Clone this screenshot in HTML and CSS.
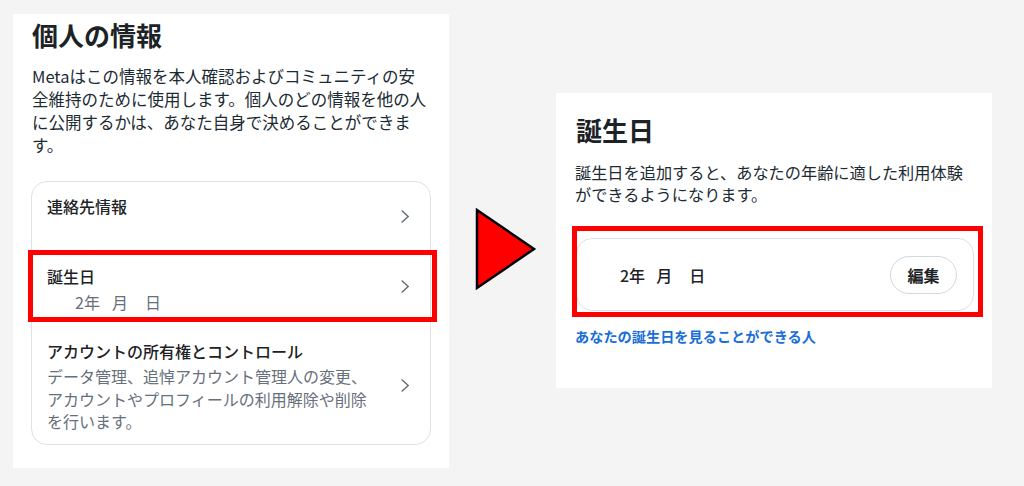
FILE: index.html
```html
<!DOCTYPE html>
<html lang="ja">
<head>
<meta charset="utf-8">
<link rel="stylesheet" href="styles.css">
</head>
<body>
<div class="stage">
  <section class="panel left">
    <h1 class="title">個人の情報</h1>
    <p class="lead">Metaはこの情報を本人確認およびコミュニティの安<br>全維持のために使用します。個人のどの情報を他の人<br>に公開するかは、あなた自身で決めることができま<br>す。</p>
    <div class="card">
      <div class="row row-contact">
        <div class="row-text">
          <div class="row-title">連絡先情報</div>
        </div>
        <svg class="chev" width="9" height="13" viewBox="0 0 9 13"><path d="M1.2 1 L7.2 6.5 L1.2 12" fill="none" stroke="#65707c" stroke-width="1.6" stroke-linecap="round" stroke-linejoin="round"/></svg>
      </div>
      <div class="row row-birth mark-left">
        <div class="row-text">
          <div class="row-title">誕生日</div>
          <div class="row-date"><span>2年</span><span class="d-m">月</span><span class="d-d">日</span></div>
        </div>
        <svg class="chev" width="9" height="13" viewBox="0 0 9 13"><path d="M1.2 1 L7.2 6.5 L1.2 12" fill="none" stroke="#65707c" stroke-width="1.6" stroke-linecap="round" stroke-linejoin="round"/></svg>
      </div>
      <div class="row row-account">
        <div class="row-text">
          <div class="row-title">アカウントの所有権とコントロール</div>
          <div class="row-sub">データ管理、追悼アカウント管理人の変更、<br>アカウントやプロフィールの利用解除や削除<br>を行います。</div>
        </div>
        <svg class="chev" width="9" height="13" viewBox="0 0 9 13"><path d="M1.2 1 L7.2 6.5 L1.2 12" fill="none" stroke="#65707c" stroke-width="1.6" stroke-linecap="round" stroke-linejoin="round"/></svg>
      </div>
    </div>
  </section>

  <div class="arrow">
    <svg width="62" height="84" viewBox="0 0 62 84"><polygon points="2,2 59,41 2,80" fill="#ff0000" stroke="#000" stroke-width="2.5" stroke-linejoin="miter"/></svg>
  </div>

  <section class="panel right">
    <h1 class="title">誕生日</h1>
    <p class="lead2">誕生日を追加すると、あなたの年齢に適した利用体験<br>ができるようになります。</p>
    <div class="bcard mark-right">
      <div class="bdate"><span>2年</span><span class="d-m2">月</span><span class="d-d2">日</span></div>
      <button class="edit">編集</button>
    </div>
    <a class="link" href="#">あなたの誕生日を見ることができる人</a>
  </section>
</div>
</body>
</html>
```

FILE: styles.css
```css
* { box-sizing: border-box; }
html, body { margin: 0; padding: 0; }
body {
  background: #f4f4f4;
  font-family: "Noto Sans CJK JP", "Noto Sans", sans-serif;
  color: #1c2b33;
  width: 1024px;
  height: 486px;
  overflow: hidden;
}
.stage {
  display: flex;
  align-items: flex-start;
  padding-left: 13px;
}
.panel {
  background: #fff;
  width: 436px;
}
.left {
  margin-top: 14px;
  height: 454px;
  padding: 4px 18px 0 18px;
}
.title {
  margin: 0;
  font-size: 26px;
  line-height: 34px;
  font-weight: 700;
  color: #1c2226;
  padding-left: 1px;
}
.lead {
  margin: 13px 0 0 1px;
  font-size: 16.5px;
  line-height: 23px;
  color: #1c2b33;
  width: 410px;
  white-space: nowrap;
}
.card {
  margin-top: 24px;
  border: 1px solid #dde2e7;
  border-radius: 16px;
  width: 400px;
}
.row {
  display: flex;
  align-items: center;
  padding: 0 20px 0 15px;
  position: relative;
}
.row-text { flex: 1; }
.row-title {
  font-size: 16px;
  line-height: 22px;
  font-weight: 500;
  color: #1c2226;
}
.row-contact { height: 68px; }
.row-contact .row-text { align-self: flex-start; padding-top: 13px; }
.row-birth { height: 72px; }
.row-birth .row-text { align-self: flex-start; padding-top: 15px; }
.row-date {
  margin-top: 4px;
  padding-left: 28px;
  font-size: 16px;
  line-height: 22px;
  color: #65707c;
}
.d-m { margin-left: 12px; }
.d-d { margin-left: 17px; }
.row-account { height: 122px; }
.row-account .row-text { align-self: flex-start; padding-top: 18px; }
.row-sub {
  margin-top: 3px;
  font-size: 16px;
  line-height: 22.5px;
  color: #65707c;
  white-space: nowrap;
}
.chev { flex: none; }
.row-account .chev { margin-top: 4px; }

.mark-left::after {
  content: "";
  position: absolute;
  top: 0;
  bottom: 0;
  left: -4px;
  right: -7px;
  border: 5px solid #ff0000;
  pointer-events: none;
}

.arrow {
  width: 107px;
  padding: 208px 0 0 26px;
}
.arrow svg { display: block; }

.right {
  margin-top: 93px;
  height: 295px;
  padding: 20px 18px 0 19px;
}
.lead2 {
  margin: 14px 0 0 0;
  font-size: 16.2px;
  line-height: 22px;
  color: #1c2b33;
  white-space: nowrap;
}
.bcard {
  position: relative;
  margin-top: 33px;
  margin-left: 1px;
  height: 73px;
  width: 398px;
  border: 1px solid #dde2e7;
  border-radius: 16px;
  display: flex;
  align-items: center;
  justify-content: space-between;
  padding: 0 16px 0 43px;
}
.bdate {
  font-size: 16px;
  line-height: 22px;
  font-weight: 500;
  color: #1c2226;
}
.d-m2 { margin-left: 11px; }
.d-d2 { margin-left: 17px; }
.edit {
  font-family: "Noto Sans CJK JP", "Noto Sans", sans-serif;
  font-size: 16px;
  font-weight: 600;
  color: #1c2226;
  background: #fff;
  border: 1px solid #d3d8de;
  border-radius: 20px;
  width: 67px;
  height: 38px;
  padding: 0;
}
.mark-right::after {
  content: "";
  position: absolute;
  top: -13px;
  bottom: -7px;
  left: -5px;
  right: -10px;
  border: 5px solid #ff0000;
  pointer-events: none;
}
.link {
  display: block;
  margin-top: 15px;
  font-size: 14.2px;
  line-height: 20px;
  font-weight: 700;
  color: #1a6ed8;
  text-decoration: none;
}
```
